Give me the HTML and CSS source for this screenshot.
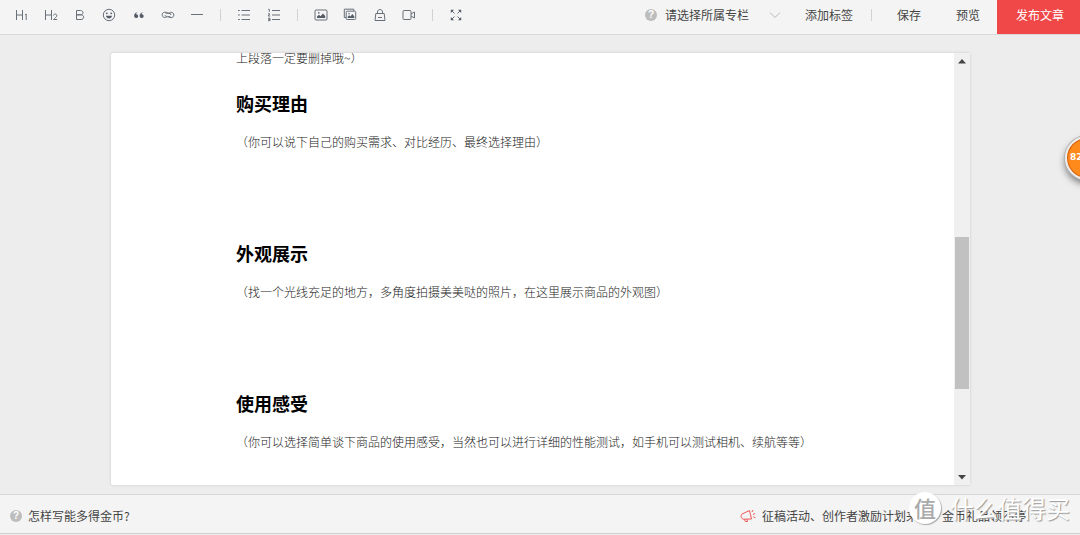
FILE: index.html
```html
<!DOCTYPE html>
<html lang="zh-CN">
<head>
<meta charset="utf-8">
<title>发布文章</title>
<link rel="stylesheet" href="styles.css">
</head>
<body>
<header class="topbar">
  <div class="tools tools-text">
    <button class="tool" aria-label="标题1"><svg width="13" height="12" viewBox="0 0 13 12"><path d="M1.5 1v10M7.5 1v10M1.5 6h6M10 5.8l1.2-.8v6"/></svg></button>
    <button class="tool" aria-label="标题2"><svg width="14" height="12" viewBox="0 0 14 12"><path d="M1.5 1v10M7.5 1v10M1.5 6h6M9.5 6.5c.3-2 3.5-1.900 3.300.2-.1 1.300-2 2.500-3.300 3.800h3.700"/></svg></button>
    <button class="tool" aria-label="加粗"><svg width="10" height="12" viewBox="0 0 10 12"><path d="M1.500 1.500h4c3.300 0 3.300 4.300 0 4.300h-4h4.500c3.500 0 3.500 4.700 0 4.700H1.500z"/></svg></button>
    <button class="tool" aria-label="表情"><svg width="14" height="14" viewBox="0 0 14 14"><circle cx="7" cy="7" r="5.700"/><g class="solid"><circle cx="4.800" cy="5.300" r=".9"/><circle cx="9.200" cy="5.300" r=".9"/><path d="M4 7.800h6c-.4 3.600-5.600 3.600-6 0z"/></g></svg></button>
    <button class="tool" aria-label="引用"><svg width="12" height="12" viewBox="0 0 12 12"><g class="solid"><path d="M5 3C3.600 3.500 3.100 4.300 3.200 5.200c2.700 0 2.600 3.800 0 3.800C.2 9 .2 3.800 5 3zM10.500 3C9.100 3.500 8.600 4.300 8.700 5.200c2.700 0 2.600 3.800 0 3.800-3 0-3-5.200 1.800-6z"/></g></svg></button>
    <button class="tool" aria-label="链接"><svg width="14" height="10" viewBox="0 0 14 10"><path d="M9.500 6.800H5.800C4.600 6.800 4.200 6 4.200 5M4.500 3.200h3.700c1.200 0 1.600.8 1.600 1.800M5.500 6.800c-.5.700-1.200.7-1.700.7C.3 7.500.3 2.200 3.800 2.200c2.800 0 3.400 1.500 5.700 1.500M8.500 3c.5-.7 1.200-.7 1.700-.7 3.500 0 3.500 5.300 0 5.300-2 0-2.400-.8-3.400-1.500"/></svg></button>
    <button class="tool" aria-label="分割线"><svg width="14" height="4" viewBox="0 0 14 4"><path d="M1 1.500h12"/></svg></button>
  </div>
  <span class="divider"></span>
  <div class="tools tools-list">
    <button class="tool" aria-label="无序列表"><svg width="14" height="12" viewBox="0 0 14 12"><path d="M4.500 1.500H13M4.500 6H13M4.500 10.500H13M1 1.500h1.800M1 6h1.800M1 10.500h1.800"/></svg></button>
    <button class="tool" aria-label="有序列表"><svg width="14" height="14" viewBox="0 0 14 14"><path d="M5 2.500h8M5 7h8M5 11.500h8M1.300 1.300h1v2.500M1 5.800h1.800L1.200 8h2M1 10.300h2v2.400H1m.4-1.200H3"/></svg></button>
  </div>
  <span class="divider"></span>
  <div class="tools tools-media">
    <button class="tool" aria-label="图片"><svg width="14" height="12" viewBox="0 0 14 12"><rect x="1" y="1" width="12" height="10" rx="1"/><path class="solid" d="M3 9V7.500l2-1.800 1.500 1.500L9 4.500l2.200 2.500v2z"/><circle class="solid" cx="4.800" cy="3.900" r=".8"/></svg></button>
    <button class="tool" aria-label="图集"><svg width="14" height="13" viewBox="0 0 14 13"><path d="M3 9.500H1.300V1.200h9.500V3"/><rect x="3.200" y="3.200" width="9.500" height="8.300" rx="1"/><path class="solid" d="M4.700 10V8.800l1.500-1.500 1.300 1.200L9.300 6l2 2.500V10z"/><circle class="solid" cx="6" cy="5.700" r=".7"/></svg></button>
    <button class="tool" aria-label="商品"><svg width="12" height="14" viewBox="0 0 12 14"><path d="M1.800 5.500h8.400l.8 7H1zM3.500 5.500V4c0-3.300 5-3.300 5 0v1.500M4 9.500h4"/></svg></button>
    <button class="tool" aria-label="视频"><svg width="14" height="12" viewBox="0 0 14 12"><rect x="1" y="1.500" width="8" height="9" rx="1"/><path d="M9 5l3.500-2v6L9 7"/></svg></button>
  </div>
  <span class="divider"></span>
  <div class="tools">
    <button class="tool" aria-label="全屏"><svg width="12" height="12" viewBox="0 0 12 12"><path d="M1.500 1.500l3 3M10.500 1.500l-3 3M1.500 10.500l3-3M10.500 10.500l-3-3"/><path class="solid" d="M.8.800H4L.8 4zM11.200.8H8l3.200 3.200zM.8 11.200H4L.8 8zM11.200 11.200H8L11.200 8z"/></svg></button>
  </div>
  <div class="actions">
    <label class="help" for="column" title="所属专栏">?</label>
    <div class="picker">
      <select id="column" aria-label="所属专栏"><option>请选择所属专栏</option></select>
      <svg class="chevron" width="12" height="8" viewBox="0 0 12 8"><path d="M1 1.500l5 5 5-5"/></svg>
    </div>
    <button class="action">添加标签</button>
    <span class="divider"></span>
    <button class="action save">保存</button>
    <button class="action preview">预览</button>
    <button class="publish">发布文章</button>
  </div>
</header>

<main class="workspace">
  <section class="editor">
    <article class="document">
      <p>上段落一定要删掉哦~）</p>
      <h2>购买理由</h2>
      <p>（你可以说下自己的购买需求、对比经历、最终选择理由）</p>
      <h2 class="spaced">外观展示</h2>
      <p>（找一个光线充足的地方，多角度拍摄美美哒的照片，在这里展示商品的外观图）</p>
      <h2 class="spaced">使用感受</h2>
      <p>（你可以选择简单谈下商品的使用感受，当然也可以进行详细的性能测试，如手机可以测试相机、续航等等）</p>
    </article>
    <div class="scrollbar">
      <svg width="16" height="16" viewBox="0 0 16 16"><path d="M4 10.500l4-4.500 4 4.500z"/></svg>
      <div class="track"><div class="thumb"></div></div>
      <svg width="16" height="16" viewBox="0 0 16 16"><path d="M4 6l4 4.500L12 6z"/></svg>
    </div>
  </section>
  <button class="score">82</button>
</main>

<footer class="bottombar">
  <a class="tip" href="#"><span class="help">?</span>怎样写能多得金币?</a>
  <a class="notice" href="#"><svg width="16" height="14" viewBox="0 0 16 14"><path d="M2 5l7.500-3.500 2 8.500-8 .2C1.200 10 .2 6.500 2 5zM4.500 10.300l.8 2.200h2.200l-.4-2.200M12 3l1-2M13 5.500l2-1M13.300 8l2 .5"/></svg>征稿活动、创作者激励计划来啦，金币礼品领不停!</a>
  <div class="watermark"><span class="seal">值</span>什么值得买</div>
</footer>
</body>
</html>
```

FILE: styles.css
```css
* { box-sizing: border-box; }

body {
  margin: 0;
  height: 100vh;
  display: flex;
  flex-direction: column;
  overflow: hidden;
  background: #ededed;
  color: #444;
  font: 12px/18px "Noto Sans CJK SC", sans-serif;
}

button, select {
  border: 0;
  padding: 0;
  background: none;
  color: inherit;
  font: inherit;
}

a { color: inherit; text-decoration: none; }

svg { display: block; flex: none; }

.topbar {
  flex: none;
  display: flex;
  align-items: center;
  height: 35px;
  padding-left: 7px;
  padding-bottom: 5px;
  background: #f4f4f4;
  border-bottom: 1px solid #dadada;
}

.tools { display: flex; }
.tools-text { width: 205px; }
.tools-list { width: 60px; }
.tools-media { width: 118px; }

.tool {
  flex: 1;
  min-width: 29px;
  height: 28px;
  display: flex;
  align-items: center;
  justify-content: center;
}

.tool svg { fill: none; stroke: #68707a; stroke-width: 1; }
.tool .solid { fill: #545c67; stroke: none; }

.divider {
  flex: none;
  width: 1px;
  height: 12px;
  margin: 0 8px;
  background: #d2d2d2;
}

.actions {
  margin-left: auto;
  display: flex;
  align-items: center;
}

.help {
  flex: none;
  width: 12px;
  height: 12px;
  border-radius: 50%;
  background: #bdbdbd;
  color: #fff;
  font: bold 10px/12px "Liberation Sans", sans-serif;
  text-align: center;
}

.picker {
  display: flex;
  align-items: center;
  margin: 0 24px 0 8px;
}

.picker select {
  appearance: none;
  width: 104px;
  height: 20px;
}

.chevron { fill: none; stroke: #b8b8b8; }

.actions .divider { margin: 0 25px 0 18px; }

.preview { margin: 0 17px 0 35px; }

.publish {
  align-self: stretch;
  height: 34px;
  width: 83px;
  margin: 0 0 -5px;
  padding: 0 0 5px 3px;
  background: #f04848;
  color: #fff;
}

.workspace {
  flex: 1;
  min-height: 0;
  position: relative;
  padding: 18px 110px 9px 111px;
}

.editor {
  height: 100%;
  display: flex;
  overflow: hidden;
  background: #fff;
  border-radius: 2px;
  box-shadow: 0 0 3px rgba(0, 0, 0, .16);
}

.document {
  flex: 1;
  margin-top: -4px;
  padding: 0 118px 0 125px;
}

.document p {
  margin: 0;
  color: #222;
  font-weight: 300;
  line-height: 18px;
}

.document h2 {
  margin: 23px 0 17px;
  color: #000;
  font-size: 18px;
  line-height: 26px;
  font-weight: 700;
}

.document .spaced { margin-top: 89px; }

.scrollbar {
  flex: none;
  width: 16px;
  display: flex;
  flex-direction: column;
  background: #f0f0f0;
}

.scrollbar svg { fill: #444; }

.track { flex: 1; padding: 0 1px; }

.thumb {
  height: 38%;
  margin-top: 168px;
  background: #c1c1c1;
}

.score {
  position: absolute;
  top: 101px;
  right: -29px;
  width: 44px;
  height: 44px;
  padding: 0 0 2px 3px;
  border: 2px solid #eee;
  border-radius: 50%;
  background: #ff8a1c;
  box-shadow: inset 0 0 0 1px #d05c10, 0 0 0 1px #b5b5b5, 0 4px 7px rgba(0, 0, 0, .5);
  color: #fff;
  font: bold 9px/16px "DejaVu Sans", sans-serif;
  text-align: left;
}

.bottombar {
  flex: none;
  position: relative;
  display: flex;
  align-items: center;
  justify-content: space-between;
  height: 40px;
  margin-bottom: 1px;
  padding: 4px 50px 0 10px;
  background: #f4f4f4;
  border-top: 1px solid #d6d6d6;
  border-bottom: 1px solid #d0d0d0;
}

.tip, .notice { display: flex; align-items: center; gap: 6px; }

.notice svg { fill: none; stroke: #f05656; }

.watermark {
  position: absolute;
  right: 10px;
  top: -3px;
  display: flex;
  align-items: center;
  gap: 9px;
  color: #fff;
  font-size: 24px;
  line-height: 32px;
  text-shadow: 1px 1px 1px #999;
}

.seal {
  width: 32px;
  height: 32px;
  border-radius: 50%;
  background: #fff;
  box-shadow: 1px 1px 1px #aaa;
  color: #aaa;
  font-size: 22px;
  line-height: 30px;
  font-weight: 500;
  text-align: center;
  text-shadow: none;
}
```
